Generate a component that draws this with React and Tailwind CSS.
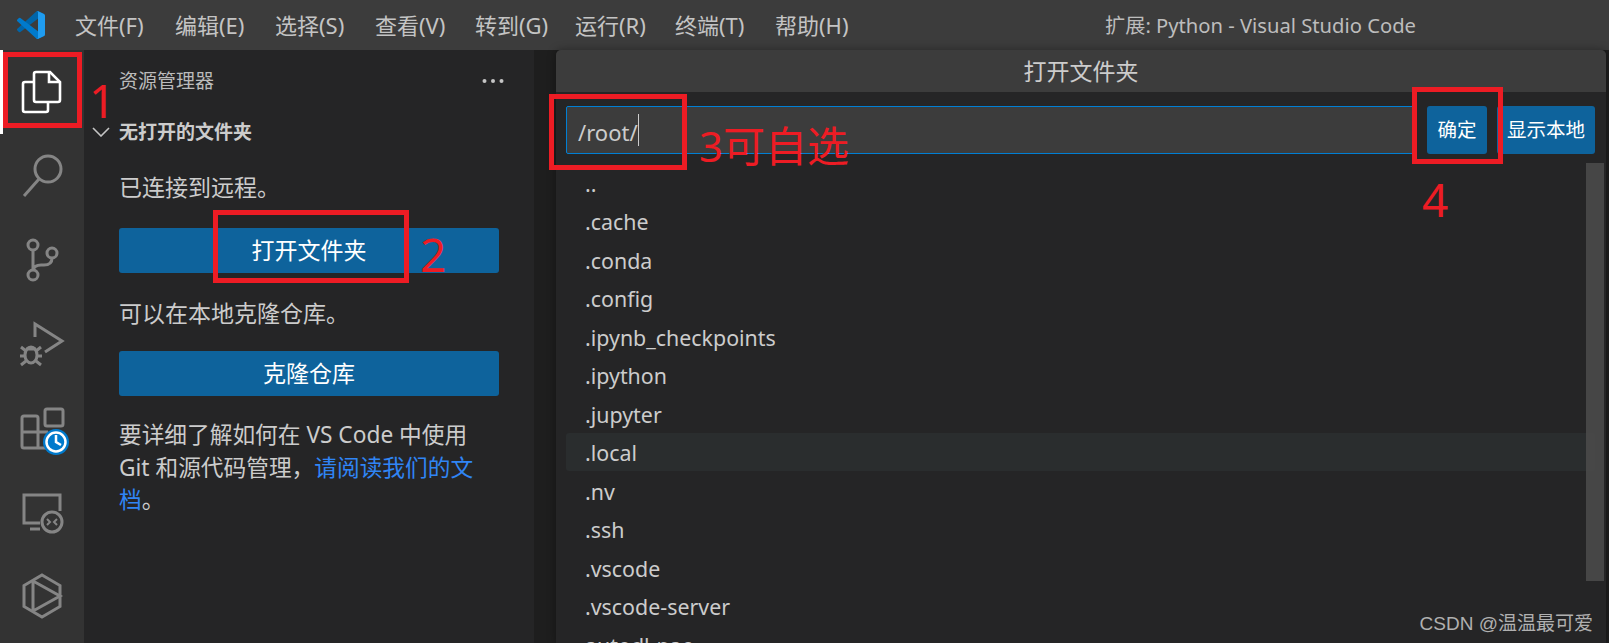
import React from 'react';

const CJK = '"Noto Sans", "Noto Sans CJK SC", sans-serif';

const MENU = ['文件(F)', '编辑(E)', '选择(S)', '查看(V)', '转到(G)', '运行(R)', '终端(T)', '帮助(H)'];
const FOLDERS = ['..', '.cache', '.conda', '.config', '.ipynb_checkpoints', '.ipython', '.jupyter', '.local', '.nv', '.ssh', '.vscode', '.vscode-server', 'autodl-pac'];

const Logo = () => (
  <svg viewBox="0 0 100 100" className="w-7 h-7">
    <path fill="#0065a9" d="M96.46 10.8L75.86.87a6.23 6.23 0 0 0-7.1 1.2L1.32 63.6a4.16 4.16 0 0 0 0 6.17l5.5 5a4.16 4.16 0 0 0 5.32.23L93.4 13.36c2.73-2.07 6.64-.13 6.64 3.3v-.24a6.25 6.25 0 0 0-3.54-5.62z" />
    <path fill="#007acc" d="M96.46 89.2l-20.6 9.92a6.23 6.23 0 0 1-7.1-1.2L1.32 36.4a4.16 4.16 0 0 1 0-6.17l5.5-5a4.16 4.16 0 0 1 5.32-.23L93.4 86.64c2.73 2.07 6.64.13 6.64-3.3v.24a6.25 6.25 0 0 1-3.54 5.62z" />
    <path fill="#1f9cf0" d="M75.86 99.13a6.23 6.23 0 0 1-7.1-1.2c2.3 2.3 6.24.67 6.24-2.58V4.65c0-3.25-3.94-4.87-6.24-2.57a6.23 6.23 0 0 1 7.1-1.2l20.6 9.9a6.25 6.25 0 0 1 3.54 5.64v67.16a6.25 6.25 0 0 1-3.54 5.63z" />
  </svg>
);

const Icon = ({ children, color = '#858585', width = 3 }) => (
  <svg viewBox="0 0 48 48" className="w-12 h-12 overflow-visible" fill="none" stroke={color} strokeWidth={width}>
    {children}
  </svg>
);

const ACTIVITY = [
  <Icon color="#ffffff" width={2.6} key="files">
    <path d="M18 4h14l10 10v18a2 2 0 0 1-2 2H18a2 2 0 0 1-2-2V6a2 2 0 0 1 2-2z" />
    <path d="M31 4v10h11" />
    <path d="M16 14H7a2 2 0 0 0-2 2v26a2 2 0 0 0 2 2h21a2 2 0 0 0 2-2v-8" />
  </Icon>,
  <Icon key="search">
    <circle cx="30" cy="17" r="13" />
    <path d="M21 27L6 44" />
  </Icon>,
  <Icon key="git">
    <circle cx="15" cy="9" r="5" />
    <circle cx="15" cy="39" r="5" />
    <circle cx="34" cy="17" r="5" />
    <path d="M15 14v20M34 22c0 5-3 7-8 7h-3c-4 0-7 1-8 5" />
  </Icon>,
  <Icon key="debug">
    <path d="M17 17V4l27 17-17 11" />
    <ellipse cx="13" cy="35" rx="6" ry="8" />
    <path d="M3 27l5 4M23 27l-5 4M2 36h5M24 36h-5M3 45l5-4M23 45l-5-4M8 29h10" />
  </Icon>,
  <Icon key="ext">
    <rect x="27" y="5" width="18" height="17" rx="2" />
    <path d="M20 44H6a2 2 0 0 1-2-2V14a2 2 0 0 1 2-2h12a2 2 0 0 1 2 2v30zM4 28h26M20 44h10" />
    <circle cx="38" cy="38" r="13" fill="#007acc" stroke="none" />
    <circle cx="38" cy="38" r="9.5" fill="#007acc" stroke="#ffffff" strokeWidth="2.5" />
    <path d="M38 31v7l5 3" stroke="#ffffff" strokeWidth="2.5" />
  </Icon>,
  <Icon key="remote">
    <path d="M22 35H6V7h36v16" />
    <path d="M12 41h10" />
    <circle cx="34" cy="34" r="10" />
    <path d="M29 31l3 3-3 3M39 31l-3 3 3 3" strokeWidth="2" />
  </Icon>,
  <Icon key="test">
    <path d="M24 3l18 10.500v21L24 45 6 34.500v-21z" />
    <path d="M15 9v29M15 9l27 15-27 15" />
  </Icon>,
];

const SideButton = ({ children }) => (
  <button className="h-[45px] w-[380px] rounded-[3px] bg-[#0e639c] text-[23px] text-white">{children}</button>
);

const RedBox = ({ className }) => (
  <div className={`absolute border-[5px] border-[#ed1c24] pointer-events-none ${className}`} />
);

const RedText = ({ className, children }) => (
  <div className={`absolute text-[#ed1c24] leading-none pointer-events-none ${className}`}>{children}</div>
);

export default function App() {
  return (
    <div className="relative w-[1609px] h-[643px] overflow-hidden flex flex-col bg-[#1e1e1e]" style={{ fontFamily: CJK }}>
      {/* title bar */}
      <div className="h-[50px] shrink-0 bg-[#3c3c3c] flex items-center text-[22px] text-[#c4c4c4]">
        <div className="w-[75px] pl-[17px] flex items-center"><Logo /></div>
        <div className="flex w-[809px]">
          {MENU.map((m) => (
            <div key={m} className="w-[100px] whitespace-nowrap">{m}</div>
          ))}
        </div>
        <div className="ml-[221px] mt-[1px] text-[20.200px] text-[#bdbdbd] whitespace-nowrap">扩展: Python - Visual Studio Code</div>
      </div>

      <div className="flex flex-1 min-h-0">
        {/* activity bar */}
        <div className="relative w-[84px] shrink-0 bg-[#333333] flex flex-col">
          <div className="absolute left-0 top-0 w-[3px] h-[84px] bg-white" />
          {ACTIVITY.map((icon) => (
            <div key={icon.key} className="h-[84px] shrink-0 flex items-center justify-center">{icon}</div>
          ))}
        </div>

        {/* explorer */}
        <div className="w-[450px] shrink-0 bg-[#252526] text-[#cccccc]">
          <div className="h-[62px] pl-[35px] pr-[30px] flex items-center justify-between">
            <span className="text-[19px] text-[#bbbbbb]">资源管理器</span>
            <svg viewBox="0 0 22 6" className="w-[22px] h-[6px]" fill="#c5c5c5">
              <circle cx="2.500" cy="3" r="2" />
              <circle cx="11" cy="3" r="2" />
              <circle cx="19.500" cy="3" r="2" />
            </svg>
          </div>
          <div className="h-[40px] flex items-center text-[19px] font-bold">
            <svg viewBox="0 0 18 10" className="w-[18px] h-[10px] ml-[8px] mr-[9px]" fill="none" stroke="#c5c5c5" strokeWidth="1.600">
              <path d="M1 1l8 8 8-8" />
            </svg>
            无打开的文件夹
          </div>
          <div className="pl-[35px] pr-[35px] pt-[19px] text-[23px]">
            <p className="leading-[32px] h-[32px]">已连接到远程。</p>
            <div className="mt-[25px]"><SideButton>打开文件夹</SideButton></div>
            <p className="mt-[24px] leading-[32px] h-[32px]">可以在本地克隆仓库。</p>
            <div className="mt-[22px]"><SideButton>克隆仓库</SideButton></div>
            <p className="mt-[23px] leading-[32.500px] w-[372px] text-[22.700px]">
              要详细了解如何在 VS Code 中使用 Git 和源代码管理，<span className="text-[#3085f5]">请阅读我们的文档</span>。
            </p>
          </div>
        </div>

        <div className="w-[22px] shrink-0 bg-[#1e1e1e]" />

        {/* open folder dialog */}
        <div className="relative w-[1050px] shrink-0 bg-[#252526] flex flex-col rounded-t-[5px] shadow-[0_0_8px_rgba(0,0,0,0.36)]">
          <div className="h-[42px] shrink-0 bg-[#3c3c3c] rounded-t-[5px] flex items-center justify-center text-[23px] text-[#cccccc]">打开文件夹</div>
          <div className="h-[71px] shrink-0 flex pt-[14px] pl-[10px] gap-[10px]">
            <div className="w-[851px] h-[48px] rounded-[2px] border border-[#007fd4] bg-[#3c3c3c] pl-[11px] flex items-center text-[22px] text-[#cccccc]">
              <span className="mt-[5px]">/root/</span>
              <span className="w-[1px] h-[32px] bg-[#cccccc]" />
            </div>
            <button className="w-[60px] h-[48px] rounded-[3px] bg-[#0e639c] text-[19.500px] text-white">确定</button>
            <button className="w-[98px] h-[48px] rounded-[3px] bg-[#0e639c] text-[19.500px] text-white">显示本地</button>
          </div>
          <div className="relative flex-1 min-h-0 overflow-hidden pl-[10px] pr-[11px]">
            {FOLDERS.map((f) => (
              <div
                key={f}
                className={`h-[38.500px] pl-[19px] flex items-center rounded-[3px] text-[21.400px] text-[#cccccc] ${f === '.local' ? 'bg-[#2a2d2e]' : ''}`}
              >
                <span className="mt-[3px]">{f}</span>
              </div>
            ))}
            <div className="absolute right-[2px] top-0 w-[18px] h-[418px] bg-[#4a4a4a]/90" />
          </div>
        </div>
      </div>

      {/* red annotations drawn over the screenshot */}
      <RedBox className="left-[3px] top-[52px] w-[79px] h-[76px]" />
      <RedText className="left-[89px] top-[77px] text-[46px]">1</RedText>
      <RedBox className="left-[213px] top-[210px] w-[196px] h-[73px]" />
      <RedText className="left-[420px] top-[231px] text-[46px]">2</RedText>
      <RedBox className="left-[549px] top-[94px] w-[138px] h-[76px]" />
      <RedText className="left-[699px] top-[125px] text-[42px]">3可自选</RedText>
      <RedBox className="left-[1412px] top-[87px] w-[91px] h-[77px]" />
      <RedText className="left-[1422px] top-[176px] text-[46px]">4</RedText>

      <div className="absolute right-[16px] bottom-[5px] text-[19px] text-[#b0b0b0]" style={{ fontFamily: '"Liberation Sans", "Noto Sans CJK SC", sans-serif' }}>CSDN @温温最可爱</div>
    </div>
  );
}
